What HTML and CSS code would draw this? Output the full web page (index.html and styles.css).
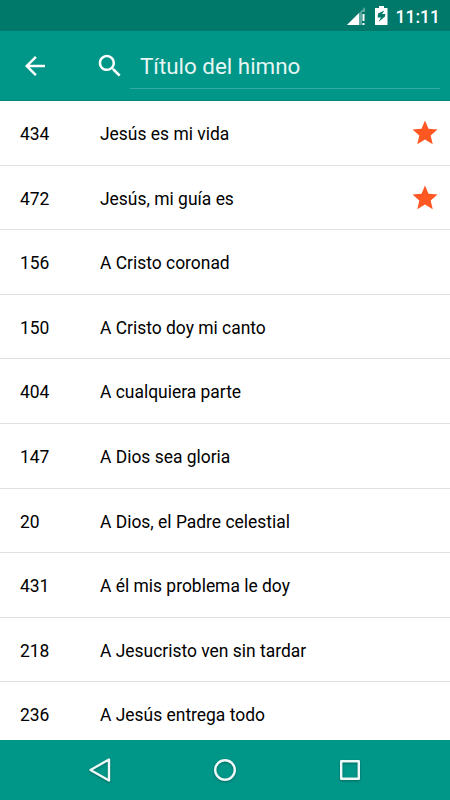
FILE: index.html
```html
<!DOCTYPE html>
<html lang="es">
<head>
	<meta charset="UTF-8">
	<meta name="viewport" content="width=device-width, initial-scale=1.0">
	<title>Himnario</title>
	<link rel="stylesheet" href="styles.css">
</head>
<body>
	<div class="status-bar">
		<svg class="signal" width="19" height="19" viewBox="0 0 19 19">
			<path d="M18 0v5h-3v13H0z" fill="#fff" opacity="0.35"/>
			<path d="M12 6v12H0z" fill="#fff"/>
			<path d="M15.500 7h2v7h-2zM15.500 16h2v2h-2z" fill="#fff"/>
		</svg>
		<svg class="battery" width="13" height="19" viewBox="0 0 13 19">
			<path fill="#fff" fill-rule="evenodd" d="M4 0h5v2h3.500v17H0V2h4zM9.500 4.500L3 7.500l-.3 4H6L3.500 16 10 10.500 10.300 8H7z"/>
		</svg>
		<span class="time">11:11</span>
	</div>
	<header>
		<svg class="icon back" viewBox="0 0 24 24">
			<path d="M20 11H7.830l5.590-5.590L12 4l-8 8 8 8 1.410-1.410L7.830 13H20v-2z"/>
		</svg>
		<svg class="icon search" viewBox="0 0 24 24">
			<path d="M15.500 14h-.79l-.28-.27C15.410 12.590 16 11.110 16 9.500 16 5.910 13.090 3 9.500 3S3 5.910 3 9.500 5.910 16 9.500 16c1.610 0 3.090-.59 4.230-1.570l.27.28v.79l5 4.990L20.490 19l-4.990-5zm-6 0C7.010 14 5 11.990 5 9.500S7.010 5 9.500 5 14 7.010 14 9.500 11.990 14 9.500 14z"/>
		</svg>
		<input type="text" class="search-input" placeholder="Título del himno">
	</header>
	<main>
		<ul class="himnos">
			<li>
				<span class="numero">434</span>
				<span class="titulo">Jesús es mi vida</span>
				<svg class="icon star" viewBox="0 0 24 24">
					<path d="M12 17.270L18.180 21l-1.640-7.030L22 9.240l-7.190-.61L12 2 9.190 8.630 2 9.240l5.460 4.730L5.820 21z"/>
				</svg>
			</li>
			<li>
				<span class="numero">472</span>
				<span class="titulo">Jesús, mi guía es</span>
				<svg class="icon star" viewBox="0 0 24 24">
					<path d="M12 17.270L18.180 21l-1.640-7.030L22 9.240l-7.190-.61L12 2 9.190 8.630 2 9.240l5.460 4.730L5.820 21z"/>
				</svg>
			</li>
			<li>
				<span class="numero">156</span>
				<span class="titulo">A Cristo coronad</span>
			</li>
			<li>
				<span class="numero">150</span>
				<span class="titulo">A Cristo doy mi canto</span>
			</li>
			<li>
				<span class="numero">404</span>
				<span class="titulo">A cualquiera parte</span>
			</li>
			<li>
				<span class="numero">147</span>
				<span class="titulo">A Dios sea gloria</span>
			</li>
			<li>
				<span class="numero">20</span>
				<span class="titulo">A Dios, el Padre celestial</span>
			</li>
			<li>
				<span class="numero">431</span>
				<span class="titulo">A él mis problema le doy</span>
			</li>
			<li>
				<span class="numero">218</span>
				<span class="titulo">A Jesucristo ven sin tardar</span>
			</li>
			<li>
				<span class="numero">236</span>
				<span class="titulo">A Jesús entrega todo</span>
			</li>
		</ul>
	</main>
	<nav>
		<svg width="30" height="30" viewBox="0 0 30 30">
			<path d="M24 4.500v21L5.500 15z"/>
		</svg>
		<svg width="30" height="30" viewBox="0 0 30 30">
			<circle cx="15" cy="15" r="9.800"/>
		</svg>
		<svg width="30" height="30" viewBox="0 0 30 30">
			<rect x="6.200" y="6.200" width="17.600" height="17.600"/>
		</svg>
	</nav>
</body>
</html>
```

FILE: styles.css
```css
* {
	margin: 0;
	padding: 0;
	box-sizing: border-box;
}
body {
	display: flex;
	flex-direction: column;
	height: 100vh;
	overflow: hidden;
	background-color: #fff;
	color: #000;
	font-family: Roboto, "Liberation Sans", sans-serif;
}

.status-bar {
	flex: none;
	display: flex;
	height: 31px;
	padding: 6px 10px 0 0;
	justify-content: flex-end;
	background-color: #00796b;
	color: #fff;
}
.signal {
	margin: 1px 9px 0 0;
}
.battery {
	margin-right: 8px;
}
.time {
	font-size: 17.5px;
	font-weight: 500;
	line-height: 22px;
}

header {
	flex: none;
	display: flex;
	align-items: center;
	height: 70px;
	padding: 1px 10px 0 20px;
	background-color: #009688;
	border-bottom: 1px solid #008578;
}
.icon {
	flex: none;
	width: 30px;
	height: 30px;
	fill: #fff;
}
.back {
	margin-right: 45px;
}
.search {
	margin-right: 5px;
}
.search-input {
	flex: 1;
	min-width: 0;
	height: 45px;
	padding: 1px 10px 0;
	border: none;
	border-bottom: 1px solid #33aba0;
	outline: none;
	background: none;
	color: #fff;
	font-family: inherit;
	font-size: 22.4px;
}
.search-input::placeholder {
	color: #e6f5f3;
}

main {
	flex: 1;
	min-height: 0;
	overflow: hidden;
}
.himnos {
	list-style: none;
}
.himnos li {
	display: flex;
	align-items: center;
	height: 64.6px;
	padding: 2.6px 10px 0 20px;
	border-bottom: 1px solid #e0e0e0;
	font-size: 17.45px;
}
.numero {
	width: 80px;
}
.titulo {
	flex: 1;
}
.star {
	margin-top: -2px;
	fill: #ff5722;
}

nav {
	flex: none;
	display: flex;
	justify-content: center;
	align-items: center;
	gap: 95px;
	height: 60px;
	background-color: #009688;
}
nav svg {
	fill: none;
	stroke: #eef8f7;
	stroke-width: 2.4;
	stroke-linejoin: round;
	filter: drop-shadow(0 1px 1px rgba(0, 0, 0, 0.3));
}
```
